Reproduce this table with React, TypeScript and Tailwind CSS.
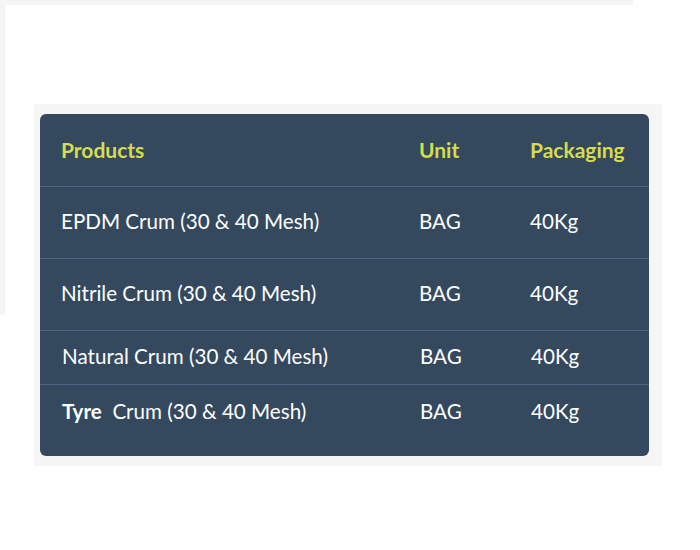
import React from 'react'

interface Row {
  product: React.ReactNode
  unit: string
  packaging: string
  tall: boolean
  nudge?: boolean
}

const rows: Row[] = [
  { product: 'EPDM Crum (30 & 40 Mesh)', unit: 'BAG', packaging: '40Kg', tall: true },
  { product: 'Nitrile Crum (30 & 40 Mesh)', unit: 'BAG', packaging: '40Kg', tall: true },
  { product: 'Natural Crum (30 & 40 Mesh)', unit: 'BAG', packaging: '40Kg', tall: false, nudge: true },
  {
    product: (
      <>
        <b className="font-bold">Tyre</b>{'\u00a0 '}Crum (30 &amp; 40 Mesh)
      </>
    ),
    unit: 'BAG',
    packaging: '40Kg',
    tall: false,
    nudge: true,
  },
]

export default function App() {
  return (
    <div className="min-h-[550px] bg-white" style={{ fontFamily: 'Lato, "Noto Sans", sans-serif' }}>
      {/* frame behind the table */}
      <div className="w-[633px] h-[315px] border-t-[5px] border-l-[5px] border-[#f5f5f5] pt-[99px] pl-[29px]">
        <div className="w-[628px] bg-[#f5f5f5] pt-[10px] pl-[6px] pr-[13px] pb-[10px]">
          <div className="rounded-[6px] bg-[#34495e] pb-[17px] text-white">
            {/* header */}
            <div className="grid grid-cols-[358px_111px_1fr] items-center h-[73px] pl-[21px] border-b border-[#4a6483] text-[21px] font-bold text-[#d5dc4d]">
              <div>Products</div>
              <div>Unit</div>
              <div className="whitespace-nowrap">Packaging</div>
            </div>
            {rows.map((r, i) => (
              <div
                key={i}
                className={`grid grid-cols-[358px_111px_1fr] items-center text-[20.6px] ${r.tall ? 'h-[72px]' : 'h-[54px]'} ${r.nudge ? 'pl-[22px]' : 'pl-[21px]'} ${i < rows.length - 1 ? 'border-b border-[#4a6483]' : ''}`}
              >
                <div className="whitespace-nowrap -mt-[2px]">{r.product}</div>
                <div className="-mt-[2px]">{r.unit}</div>
                <div className="-mt-[2px]">{r.packaging}</div>
              </div>
            ))}
          </div>
        </div>
      </div>
    </div>
  )
}
